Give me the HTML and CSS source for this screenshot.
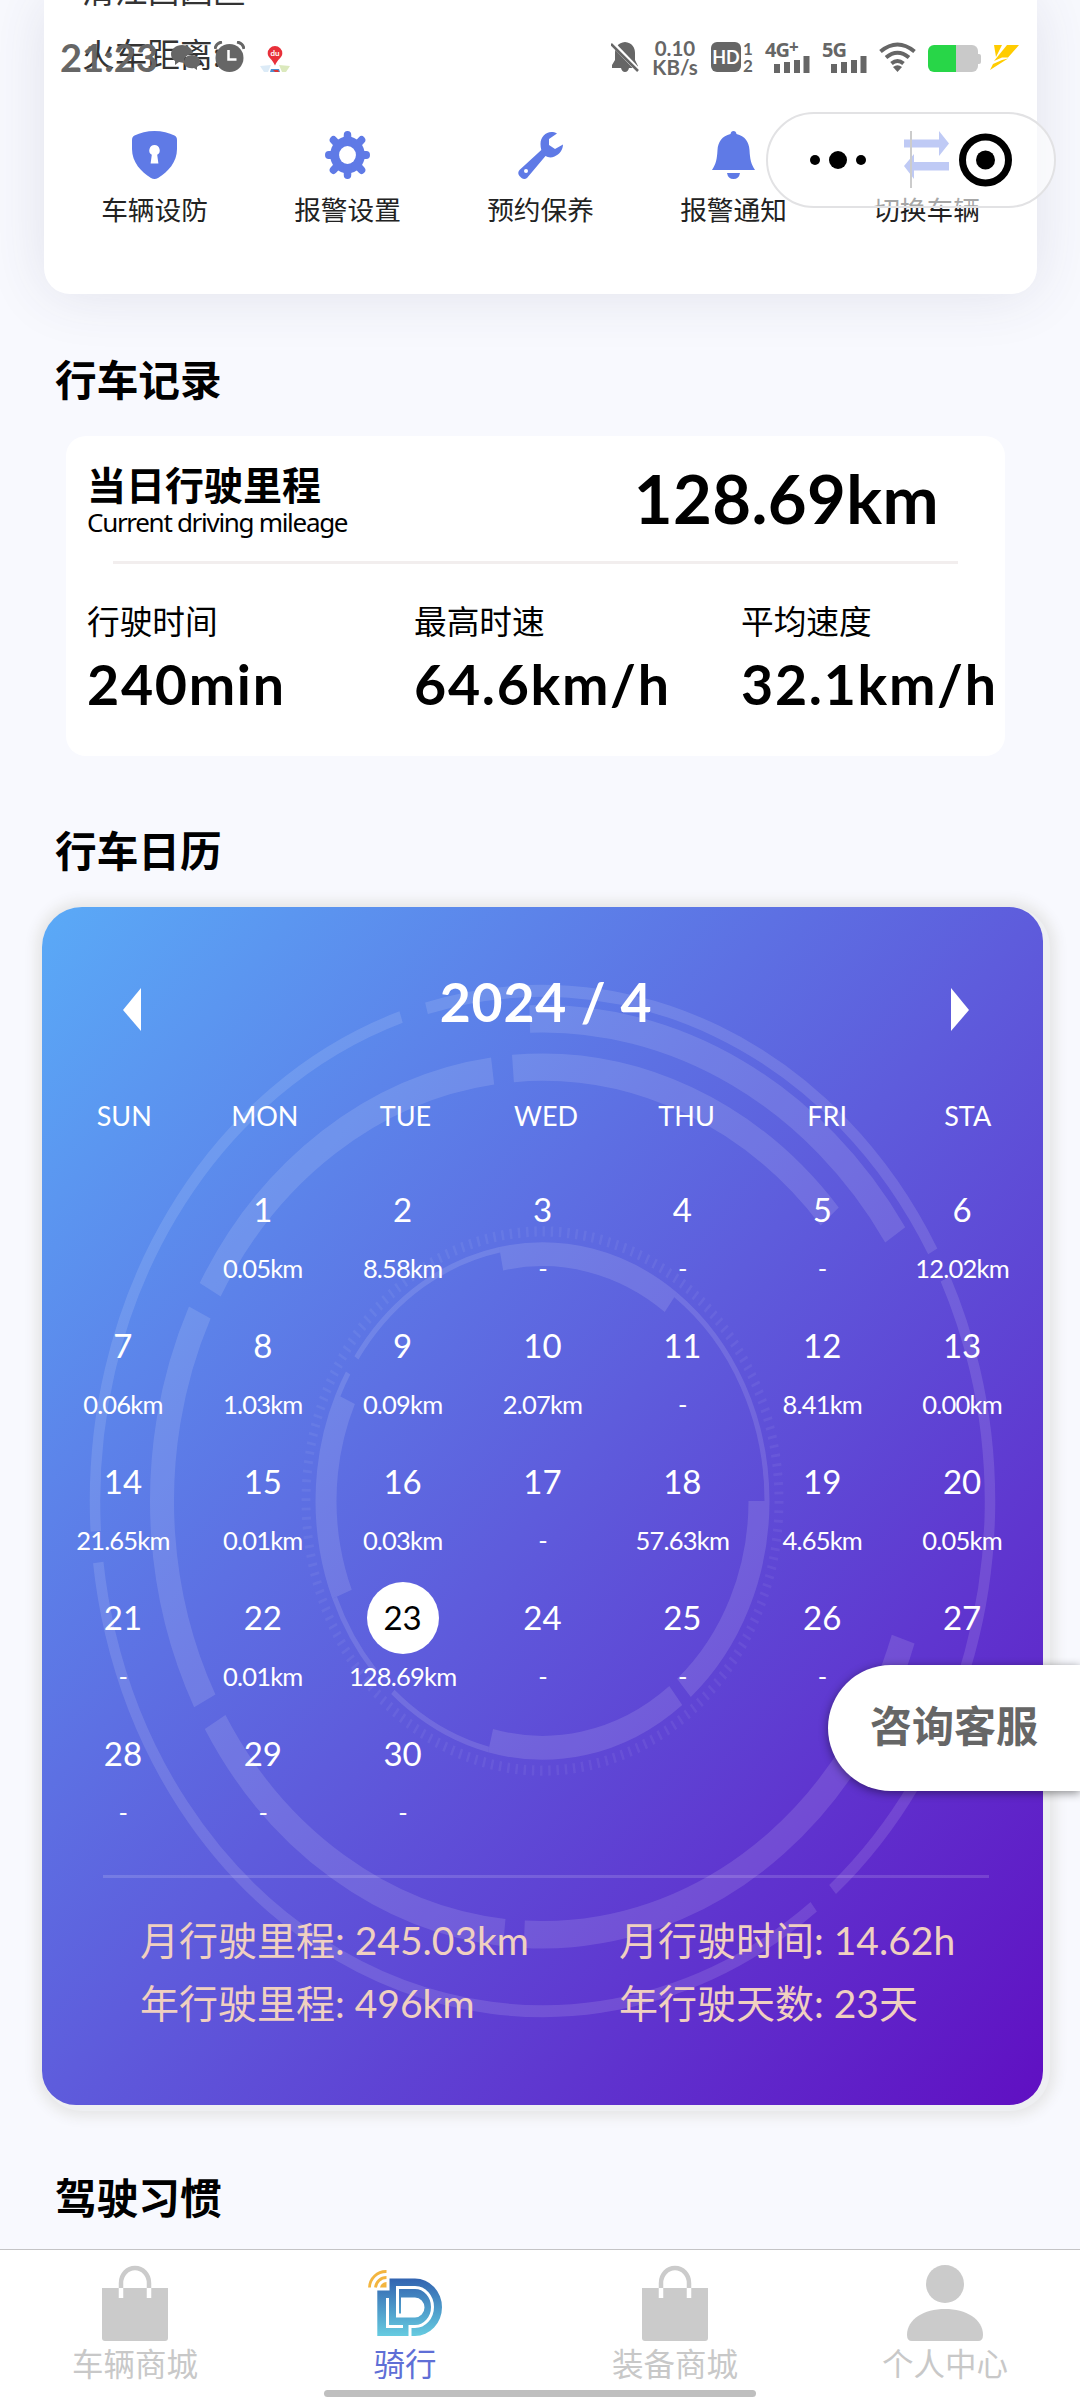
FILE: index.html
```html
<!DOCTYPE html>
<html lang="zh-CN">
<head>
<meta charset="utf-8">
<title>骑行</title>
<link rel="stylesheet" href="styles.css">
</head>

<body>
<div class="page">

	<div class="topcard">
		<div class="place">
			<p>清江西园区</p>
			<p>火车距离:</p>
		</div>
		<ul class="menu">
			<li>
				<svg class="ico" viewBox="0 0 45 48"><path fill="#5f7ae6" d="M22.500 0C15 0 8 2 2.500 4.500Q0 5.500 0 9v9c0 13 9 23 19 29q3.500 2 7 0c10-6 19-16 19-29V9q0-3.500-2.500-4.500C37 2 30 0 22.500 0z"/><path fill="#fff" d="M22.500 14a5.300 5.300 0 0 1 2.700 9.800l1.200 8.700h-7.800l1.200-8.700A5.300 5.300 0 0 1 22.500 14z"/></svg>
				<span>车辆设防</span>
			</li>
			<li>
				<svg class="ico" viewBox="0 0 48 48" preserveAspectRatio="none"><circle cx="24" cy="24" r="18.500" fill="#5f7ae6"/><g stroke="#5f7ae6" stroke-width="8" stroke-linecap="round"><path d="M24 4v40M4 24h40M9 9l30 30M39 9L9 39"/></g><circle cx="24" cy="24" r="9" fill="#fff"/></svg>
				<span>报警设置</span>
			</li>
			<li>
				<svg class="ico" viewBox="0 0 45 48"><path fill="#5f7ae6" d="M39 2.500C31 -2 22.500 4 22.500 13q0 3 .8 6L1.500 39Q-1 42 1.500 45l2 2q3 2 5.500 0L27.500 25q4 2.500 9 .5c5-2 8.500-7 8.500-12l-8 4.500-6-4V8z"/><circle cx="8" cy="40" r="2" fill="#fff"/></svg>
				<span>预约保养</span>
			</li>
			<li>
				<svg class="ico" viewBox="0 0 45 48"><path fill="#5f7ae6" d="M22.500 0q2.500 0 3 3C34 5 38 11 38.500 19c.5 9 1.500 14 5.500 20H1c4-6 5-11 5.500-20C7 11 11 5 19.500 3q.5-3 3-3zM16 42h13q-1 6-6.500 6T16 42z"/></svg>
				<span>报警通知</span>
			</li>
			<li>
				<svg class="ico" viewBox="0 0 45 48"><path fill="#5f7ae6" d="M0 8.500h35V0l10 12.500L35 25v-8.500H0zM45 31H10v-8L0 35l10 13v-8.500h35z"/></svg>
				<span>切换车辆</span>
			</li>
		</ul>
	</div>

	<h2 class="title">行车记录</h2>
	<div class="record">
		<div class="today">
			<div class="names">
				<h3>当日行驶里程</h3>
				<p>Current driving mileage</p>
			</div>
			<strong class="total">128.69km</strong>
		</div>
		<div class="stats">
			<div class="stat"><span>行驶时间</span><b>240min</b></div>
			<div class="stat"><span>最高时速</span><b>64.6km/h</b></div>
			<div class="stat"><span>平均速度</span><b>32.1km/h</b></div>
		</div>
	</div>

	<h2 class="title title2">行车日历</h2>
	<div class="calendar">
		<div class="calbg">
			<!-- dashed rings, one unit of pathLength = one degree -->
			<svg width="1001" height="1198" viewBox="0 0 1001 1198">
				<g transform="translate(500.5 594) scale(1 1.14)" fill="none" stroke="#fff" stroke-opacity=".12">
					<circle r="447.500" pathLength="360" stroke-width="10.500" transform="rotate(-105)" stroke-dasharray="75.7 3.5 75.4 3.1 120.4 3.5 75 3.4"/>
					<circle r="423" pathLength="360" stroke-width="24" transform="rotate(-91.7)" stroke-dasharray="58.2 301.8"/>
					<circle r="380.500" pathLength="360" stroke-width="24" transform="rotate(-94.4)" stroke-dasharray="53.4 59.6 74.2 3 53.6 3.2 53.2 3.4 53.3 3.1"/>
					<circle r="216.500" pathLength="360" stroke-width="21" transform="rotate(-101)" stroke-dasharray="47.4 53.6 49.2 2.8 51.9 53.9 46.6 54.6"/>
					<circle r="224.500" pathLength="360" stroke-width="5" transform="rotate(-53.6)" stroke-dasharray="53.6 103.9 27.9 6.7 19.3 46.6 5.6 4 45 47.4"/>
					<circle r="236.500" pathLength="360" stroke-width="9" stroke-opacity=".06" stroke-dasharray=".6 1.4"/>
				</g>
			</svg>
		</div>
		<div class="month">
			<svg width="18" height="43" viewBox="0 0 18 43"><path fill="#fff" d="M18 0v43L0 22z"/></svg>
			<strong>2024 / 4</strong>
			<svg width="18" height="43" viewBox="0 0 18 43"><path fill="#fff" d="M0 0v43l18-21z"/></svg>
		</div>
		<div class="week">
			<span>SUN</span><span>MON</span><span>TUE</span><span>WED</span><span>THU</span><span>FRI</span><span>STA</span>
		</div>
		<div class="days">
			<div class="day"></div>
			<div class="day"><b>1</b><i>0.05km</i></div>
			<div class="day"><b>2</b><i>8.58km</i></div>
			<div class="day"><b>3</b><i>-</i></div>
			<div class="day"><b>4</b><i>-</i></div>
			<div class="day"><b>5</b><i>-</i></div>
			<div class="day"><b>6</b><i>12.02km</i></div>

			<div class="day"><b>7</b><i>0.06km</i></div>
			<div class="day"><b>8</b><i>1.03km</i></div>
			<div class="day"><b>9</b><i>0.09km</i></div>
			<div class="day"><b>10</b><i>2.07km</i></div>
			<div class="day"><b>11</b><i>-</i></div>
			<div class="day"><b>12</b><i>8.41km</i></div>
			<div class="day"><b>13</b><i>0.00km</i></div>

			<div class="day"><b>14</b><i>21.65km</i></div>
			<div class="day"><b>15</b><i>0.01km</i></div>
			<div class="day"><b>16</b><i>0.03km</i></div>
			<div class="day"><b>17</b><i>-</i></div>
			<div class="day"><b>18</b><i>57.63km</i></div>
			<div class="day"><b>19</b><i>4.65km</i></div>
			<div class="day"><b>20</b><i>0.05km</i></div>

			<div class="day"><b>21</b><i>-</i></div>
			<div class="day"><b>22</b><i>0.01km</i></div>
			<div class="day on"><b>23</b><i>128.69km</i></div>
			<div class="day"><b>24</b><i>-</i></div>
			<div class="day"><b>25</b><i>-</i></div>
			<div class="day"><b>26</b><i>-</i></div>
			<div class="day"><b>27</b></div>

			<div class="day"><b>28</b><i>-</i></div>
			<div class="day"><b>29</b><i>-</i></div>
			<div class="day"><b>30</b><i>-</i></div>
		</div>
		<div class="sum">
			<p>月行驶里程: 245.03km</p>
			<p>月行驶时间: 14.62h</p>
			<p>年行驶里程: 496km</p>
			<p>年行驶天数: 23天</p>
		</div>
	</div>

	<h2 class="title title3">驾驶习惯</h2>

	<!-- phone status bar -->
	<div class="status">
		<span class="clock">21:23</span>
		<svg class="chat" width="30" height="26" viewBox="0 0 30 26"><path fill="#666" d="M11 0c6 0 11 4 11 9-6 0-10 4-9 9l-5-1-4 3v-4C1 14 0 12 0 9c0-5 5-9 11-9z"/><path fill="#666" d="M21 10c5 0 8 3 8 7 0 2-1 4-3 5v3l-3-2c-6 1-10-2-10-6s3-7 8-7z"/></svg>
		<svg class="alarm" width="31" height="31" viewBox="0 0 31 31"><circle cx="15.500" cy="17" r="14" fill="#666"/><path d="M1 8Q2 2 8 1M30 8Q29 2 23 1" fill="none" stroke="#666" stroke-width="3"/><path d="M14.500 9v9.500h8" fill="none" stroke="#fff" stroke-width="2.500"/></svg>
		<svg class="map" width="30" height="27" viewBox="0 0 30 27"><path fill="#dcebf7" d="M0 20l11-1-3 7H4z"/><path fill="#dbe9bd" d="M30 20l-11-1 3 7h4z"/><path fill="#4a8fd0" d="M11 23h8l1 3H10z"/><path fill="#d33" d="M13 24h5l1 2h-4z"/><path fill="#e8303a" d="M15 0a7.300 7.300 0 0 1 7.300 7.500c0 4-5 6-7.300 12-2.300-6-7.300-8-7.300-12A7.300 7.300 0 0 1 15 0z"/><text x="15" y="10" text-anchor="middle" class="du">du</text></svg>
		<svg class="mute" width="28" height="31" viewBox="0 0 28 31"><path fill="#666" d="M14 0c7 1 10 5 10 11v7l3 6v2h-9q-1 4-4 4t-4-4H1v-3l3-5v-7C4 5 7 1 14 0z"/><path stroke="#fff" stroke-width="5" d="M0 0l28 29"/><path stroke="#666" stroke-width="2.500" d="M0 2l27 27"/></svg>
		<span class="speed">0.10<br>KB/s</span>
		<span class="hd">HD</span>
		<span class="sim"><i>1</i><i>2</i></span>
		<span class="net net4">4G<sup>+</sup>
			<svg width="36" height="17" viewBox="0 0 36 17"><path stroke="#666" stroke-width="6" d="M3 8v9M13 6v11M23 4v13M32.500 0v17"/></svg></span>
		<span class="net net5">5G
			<svg width="36" height="17" viewBox="0 0 36 17"><path stroke="#666" stroke-width="6" d="M3 8v9M13 6v11M23 4v13M32.500 0v17"/></svg></span>
		<svg class="wifi" width="37" height="30" viewBox="0 0 37 30"><g fill="none" stroke="#666" stroke-width="4"><path d="M1.500 9.500q17-14 34 0M7 15.500q11.500-9.500 23 0M12.500 21.500q6-5 12 0"/></g><path fill="#666" d="M14 25q4.500-3.500 9 0l-4.500 5z"/></svg>
		<span class="battery"></span>
		<svg class="bolt" width="29" height="25" viewBox="0 0 29 25"><path fill="#fc0" d="M4 0h8L6 12zM17 0h12L18 12.500h-6L4 16zM3 19l9-4 6-1.500L0 25z"/></svg>
	</div>

	<!-- mini program capsule -->
	<div class="capsule">
		<svg width="290" height="96" viewBox="0 0 290 96"><circle cx="49" cy="48" r="5"/><circle cx="72" cy="48" r="9"/><circle cx="95" cy="48" r="5"/><path stroke="#ccc" stroke-width="2" d="M145 19v57"/><circle cx="219.500" cy="48" r="23" fill="none" stroke="#000" stroke-width="7"/><circle cx="219.500" cy="48" r="9.500"/></svg>
	</div>

	<div class="service">咨询客服</div>

	<div class="tabbar">
		<div class="tab">
			<svg width="76" height="76" viewBox="0 0 76 76"><path fill="#cbcbcb" d="M5 23h66v50q0 3-3 3H8q-3 0-3-3z"/><path d="M24 23v-5a14 15 0 0 1 28 0v5" fill="none" stroke="#cbcbcb" stroke-width="4.500"/><path d="M24 23v10M52 23v10" stroke="#fff" stroke-width="4.500"/></svg>
			<span>车辆商城</span>
		</div>
		<div class="tab cur">
			<svg width="76" height="76" viewBox="-1 -5 76 76">
				<defs><linearGradient id="ld" x1="0" y1="0" x2="0" y2="1"><stop offset="0" stop-color="#3263b0"/><stop offset="1" stop-color="#66cbe0"/></linearGradient></defs>
				<path fill="url(#ld)" d="M21.500 8.500H47a27 28.700 0 0 1 0 57.400H9.300V20.500h12.200z"/>
				<path fill="#fff" d="M33 27.500h14a9.500 10 0 0 1 0 20H28v-4h5z"/>
				<path fill="none" stroke="#fff" stroke-width="3" d="M29.500 47V17.500H47a17.500 19.500 0 0 1 0 39H42V66M19.500 28v28.500H35"/>
				<g fill="none" stroke="#f3b53f" stroke-width="2.800"><path d="M1.500 17.500a16.500 16.500 0 0 1 17-16M7.500 17.500a11 11 0 0 1 11-10"/></g><path fill="#f3b53f" d="M12 17.500q1-5 6.500-5.500v5.500z"/>
			</svg>
			<span>骑行</span>
		</div>
		<div class="tab">
			<svg width="76" height="76" viewBox="0 0 76 76"><path fill="#cbcbcb" d="M5 23h66v50q0 3-3 3H8q-3 0-3-3z"/><path d="M24 23v-5a14 15 0 0 1 28 0v5" fill="none" stroke="#cbcbcb" stroke-width="4.500"/><path d="M24 23v10M52 23v10" stroke="#fff" stroke-width="4.500"/></svg>
			<span>装备商城</span>
		</div>
		<div class="tab">
			<svg width="76" height="76" viewBox="0 0 76 76"><circle cx="38" cy="19" r="19" fill="#cbcbcb"/><path fill="#cbcbcb" d="M38 44c21 0 38 10 38 26q0 6-5 6H5q-5 0-5-6c0-16 17-26 38-26z"/></svg>
			<span>个人中心</span>
		</div>
		<div class="homebar"></div>
	</div>

</div>
</body>
</html>
```
FILE: styles.css
```css
body{
	margin: 0;
	padding: 0;
	background: #f8f9fe;
	font-family: Lato, "Noto Sans CJK SC", sans-serif;
	color: #000;
}
p, h2, h3, ul{
	margin: 0;
	padding: 0;
}
i{
	font-style: normal;
}
svg{
	display: block;
}
.page{
	position: relative;
	width: 1080px;
	height: 2400px;
	overflow: hidden;
	display: flow-root;
}

/* vehicle card */
.topcard{
	display: flow-root;
	height: 294px;
	margin: 0 43px 0 44px;
	background: #fff;
	border-radius: 0 0 26px 26px;
	box-shadow: 0 0 60px rgba(60,60,100,.12);
}
.place{
	margin: -43px 0 0 38px;
	font-family: "Noto Sans CJK SC", sans-serif;
	font-size: 32.700px;
	line-height: 64px;
	color: #333;
}
.menu{
	display: grid;
	grid-template-columns: repeat(5, 193px);
	justify-content: center;
	margin-top: 46px;
	list-style: none;
}
.menu li{
	display: flex;
	flex-direction: column;
	align-items: center;
	gap: 10px;
	font-family: "Noto Sans CJK SC", sans-serif;
	font-size: 26.700px;
	line-height: 40px;
	color: #222;
}
.ico{
	width: 45px;
	height: 48px;
}

.title{
	margin: 54px 0 0 55px;
	font-family: "Noto Sans CJK SC", sans-serif;
	font-size: 41.700px;
	line-height: 60px;
	font-weight: bold;
}
.title2{
	margin-top: 63px;
}
.title3{
	margin-top: 55px;
}

/* driving record */
.record{
	display: flow-root;
	height: 320px;
	margin: 28px 75px 0 66px;
	background: #fff;
	border-radius: 20px;
}
.today{
	display: flex;
	justify-content: space-between;
	height: 101px;
	margin: 0 47px;
	padding-top: 24px;
	border-bottom: 3px solid #f2eeee;
}
.names{
	margin-left: -26px;
}
.names h3{
	font-family: "Noto Sans CJK SC", sans-serif;
	font-size: 39px;
	line-height: 46px;
}
.names p{
	font-family: "Noto Sans", sans-serif;
	font-size: 26px;
	line-height: 32px;
	letter-spacing: -1.300px;
}
.total{
	margin-right: 19px;
	font-size: 67px;
	line-height: 76px;
	letter-spacing: .4px;
}
.stats{
	display: grid;
	grid-template-columns: repeat(3, 327px);
	padding: 32px 0 0 21px;
}
.stat span, .stat b{
	display: block;
	font-size: 55.500px;
	line-height: 80px;
	letter-spacing: 1.700px;
	white-space: nowrap;
}
.stat span{
	font-family: "Noto Sans CJK SC", sans-serif;
	font-size: 32.700px;
	line-height: 48px;
	letter-spacing: 0;
}

/* calendar */
.calendar{
	position: relative;
	display: flow-root;
	height: 1204px;
	margin: 28px 30px 0 42px;
	border-radius: 40px;
	background: #eeeff2;
	box-shadow: 0 0 14px 5px #e4e4e4;
	color: #fff;
}
.calbg{
	position: absolute;
	top: 0;
	left: 0;
	width: 1001px;
	height: 1198px;
	overflow: hidden;
	border-radius: 40px 34px 34px 34px;
	background: linear-gradient(to bottom right, #5aaaf7, #5e5cdc 50%, #600fc2);
}
.month, .week, .days, .sum{
	position: relative;
}
.month{
	display: flex;
	justify-content: space-between;
	align-items: center;
	height: 80px;
	margin: 54px 81px 0;
}
.month svg{
	margin-top: 16px;
}
.month strong{
	font-size: 53.500px;
	letter-spacing: .8px;
}
.week, .days{
	display: grid;
	grid-template-columns: repeat(7, 1fr);
	text-align: center;
}
.week{
	margin: 55px 12px 0;
	font-size: 27px;
	line-height: 40px;
}
.days{
	margin: 38px 18px 0 11px;
	grid-auto-rows: 136px;
}
.day b{
	display: block;
	width: 72px;
	height: 72px;
	margin: 0 auto 4px;
	border-radius: 50%;
	font-size: 33px;
	line-height: 70px;
	font-weight: normal;
}
.day i{
	display: block;
	font-size: 25.500px;
	line-height: 36px;
	letter-spacing: -.8px;
}
.on b{
	background: #fff;
	color: #000;
}
.sum{
	display: grid;
	grid-template-columns: 479px 1fr;
	margin: 21px 61px 0;
	padding: 31px 0 0 37px;
	border-top: 3px solid rgba(255,255,255,.15);
	font-size: 39px;
	line-height: 63px;
	color: #f0d0c0;
	white-space: nowrap;
}

/* status bar */
.status{
	position: absolute;
	top: 0;
	left: 0;
	width: 1080px;
	height: 114px;
	color: #666;
	font-weight: bold;
}
.status > *{
	position: absolute;
}
.clock{
	top: 34px;
	left: 60px;
	font-size: 38px;
	line-height: 46px;
}
.chat{ top: 45px; left: 171px; }
.alarm{ top: 41px; left: 214px; }
.map{ top: 46px; left: 260px; }
.du{
	font-size: 8px;
	fill: #fff;
}
.mute{ top: 42px; left: 611px; }
.speed{
	top: 39px;
	left: 650px;
	width: 50px;
	text-align: center;
	font-size: 20.500px;
	line-height: 19px;
}
.hd{
	top: 42px;
	left: 711px;
	width: 30px;
	height: 30px;
	border-radius: 6px;
	background: #666;
	color: #fff;
	font-size: 18px;
	line-height: 30px;
	text-align: center;
}
.sim{
	top: 40px;
	left: 743px;
	font-size: 17px;
	line-height: 17px;
}
.sim i{
	display: block;
	text-align: center;
}
.net{
	top: 40px;
	font-family: "Noto Sans", sans-serif;
	font-size: 20px;
	line-height: 20px;
	letter-spacing: -1px;
}
.net4{ left: 765px; }
.net5{ left: 822px; }
.net sup{
	font-size: 17px;
	line-height: 10px;
	vertical-align: 4px;
}
.net svg{
	position: absolute;
	top: 16px;
	left: 9px;
}
.wifi{ top: 42px; left: 879px; }
.battery{
	top: 45px;
	left: 928px;
	width: 50px;
	height: 27px;
	border-radius: 6px;
	background: linear-gradient(to right, #28d648 28px, #c9c9c9 28px);
}
.battery:after{
	content: "";
	position: absolute;
	top: 9px;
	right: -3px;
	width: 4px;
	height: 10px;
	border-radius: 0 2px 2px 0;
	background: #c9c9c9;
}
.bolt{ top: 45px; left: 990px; }

.capsule{
	position: absolute;
	top: 112px;
	left: 766px;
	width: 290px;
	height: 96px;
	box-sizing: border-box;
	border: 2px solid #e2e2e4;
	border-radius: 48px;
	background: rgba(255,255,255,.6);
}
.capsule svg{
	margin: -2px;
}

.service{
	position: absolute;
	top: 1665px;
	right: 0;
	width: 252px;
	height: 126px;
	box-sizing: border-box;
	padding-left: 42px;
	border-radius: 63px 0 0 63px;
	background: #fff;
	box-shadow: 0 2px 10px rgba(0,0,0,.45);
	font-family: "Noto Sans CJK SC", sans-serif;
	font-size: 42px;
	line-height: 118px;
	font-weight: bold;
	color: #666;
}

/* bottom tabs */
.tabbar{
	position: absolute;
	left: 0;
	bottom: 0;
	display: grid;
	grid-template-columns: repeat(4, 1fr);
	width: 1080px;
	height: 151px;
	box-sizing: border-box;
	border-top: 1px solid #c4c4c6;
	background: #fff;
}
.tab{
	display: flex;
	flex-direction: column;
	align-items: center;
	padding-top: 15px;
	font-family: "Noto Sans CJK SC", sans-serif;
	font-size: 31.500px;
	line-height: 42px;
	color: #c8c8c8;
}
.cur{
	color: #5f6fd6;
}
.homebar{
	position: absolute;
	left: 324px;
	bottom: 3px;
	width: 432px;
	height: 7px;
	border-radius: 4px;
	background: #bfbfbf;
}
```
